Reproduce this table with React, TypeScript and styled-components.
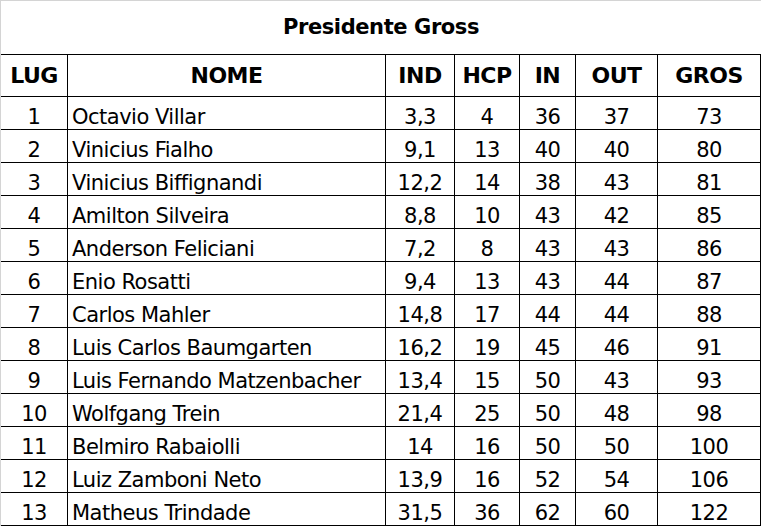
import React from "react";
import styled, { createGlobalStyle } from "styled-components";

const Global = createGlobalStyle`
  html, body { margin: 0; padding: 0; background: #ffffff; }
  body { font-family: "DejaVu Sans", Verdana, sans-serif; color: #000; }
`;

const Page = styled.div`
  width: 760px;
  height: 525px;
  border-left: 1px solid #d4d4d4;
  border-top: 1px solid #d4d4d4;
  display: flex;
  flex-direction: column;
  overflow: hidden;
  background: #fff;
`;

const Title = styled.div`
  height: 53px;
  box-sizing: border-box;
  padding-top: 14px;
  text-align: center;
  font-weight: bold;
  font-size: 21px;
  letter-spacing: -0.4px;
  line-height: 24px;
`;

const Grid = styled.div`
  display: grid;
  grid-template-columns: 66px 317px 68px 64px 55px 81px 102px;
  grid-auto-rows: 32px;
  grid-template-rows: 41px;
  gap: 1px;
  padding: 1px 1px 1px 0;
  background: #000;
`;

const HeadCell = styled.div`
  background: #fff;
  display: flex;
  align-items: center;
  justify-content: center;
  font-weight: bold;
  font-size: 22px;
  letter-spacing: -0.5px;
  line-height: 24px;
`;

const Cell = styled.div<{ $left?: boolean }>`
  background: #fff;
  display: flex;
  align-items: flex-end;
  justify-content: ${(p) => (p.$left ? "flex-start" : "center")};
  padding-left: ${(p) => (p.$left ? "4px" : "0")};
  font-size: 21px;
  letter-spacing: -0.5px;
  line-height: 24px;
  white-space: nowrap;
`;

const headers = ["LUG", "NOME", "IND", "HCP", "IN", "OUT", "GROS"];

const rows: [string, string, string, string, string, string, string][] = [
  ["1", "Octavio Villar", "3,3", "4", "36", "37", "73"],
  ["2", "Vinicius Fialho", "9,1", "13", "40", "40", "80"],
  ["3", "Vinicius Biffignandi", "12,2", "14", "38", "43", "81"],
  ["4", "Amilton Silveira", "8,8", "10", "43", "42", "85"],
  ["5", "Anderson Feliciani", "7,2", "8", "43", "43", "86"],
  ["6", "Enio Rosatti", "9,4", "13", "43", "44", "87"],
  ["7", "Carlos Mahler", "14,8", "17", "44", "44", "88"],
  ["8", "Luis Carlos Baumgarten", "16,2", "19", "45", "46", "91"],
  ["9", "Luis Fernando Matzenbacher", "13,4", "15", "50", "43", "93"],
  ["10", "Wolfgang Trein", "21,4", "25", "50", "48", "98"],
  ["11", "Belmiro Rabaiolli", "14", "16", "50", "50", "100"],
  ["12", "Luiz Zamboni Neto", "13,9", "16", "52", "54", "106"],
  ["13", "Matheus Trindade", "31,5", "36", "62", "60", "122"],
];

export default function App() {
  return (
    <>
      <Global />
      <Page>
        <Title>Presidente Gross</Title>
        <Grid>
          {headers.map((h) => (
            <HeadCell key={h}>{h}</HeadCell>
          ))}
          {rows.map((r) =>
            r.map((v, i) => (
              <Cell key={r[0] + "-" + i} $left={i === 1}>
                {v}
              </Cell>
            ))
          )}
        </Grid>
      </Page>
    </>
  );
}
